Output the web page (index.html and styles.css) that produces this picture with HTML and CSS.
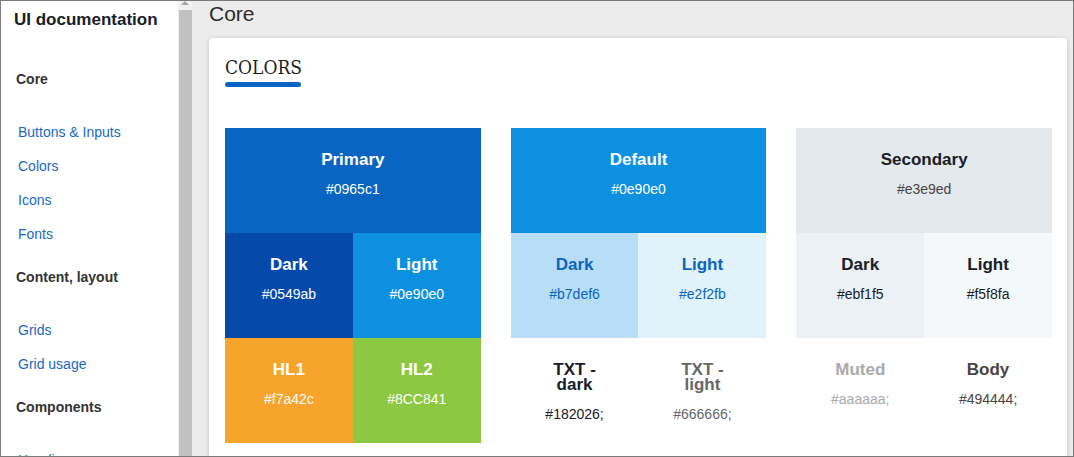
FILE: index.html
```html
<!DOCTYPE html>
<html lang="en">
<head>
<meta charset="utf-8">
<title>UI documentation</title>
<link rel="stylesheet" href="styles.css">
</head>
<body>
<div class="frame">
  <aside class="sidebar">
    <div class="brand">UI documentation</div>
    <nav class="nav-group">
      <div class="nav-heading">Core</div>
      <a class="nav-link" href="#">Buttons &amp; Inputs</a>
      <a class="nav-link" href="#">Colors</a>
      <a class="nav-link" href="#">Icons</a>
      <a class="nav-link" href="#">Fonts</a>
    </nav>
    <nav class="nav-group">
      <div class="nav-heading">Content, layout</div>
      <a class="nav-link" href="#">Grids</a>
      <a class="nav-link" href="#">Grid usage</a>
    </nav>
    <nav class="nav-group">
      <div class="nav-heading">Components</div>
      <a class="nav-link" href="#">Headings</a>
    </nav>
  </aside>
  <div class="scrollbar">
    <div class="scroll-arrow"></div>
    <div class="scroll-thumb"></div>
  </div>
  <main class="main">
    <h1 class="page-title">Core</h1>
    <section class="card">
      <div class="section-title">
        <h2 class="section-heading">COLORS</h2>
        <span class="title-bar"></span>
      </div>
      <div class="palette">
        <div class="swatch-group">
          <div class="swatch swatch-wide c-primary"><div class="swatch-name">Primary</div><div class="swatch-hex">#0965c1</div></div>
          <div class="swatch c-primary-dark"><div class="swatch-name">Dark</div><div class="swatch-hex">#0549ab</div></div>
          <div class="swatch c-primary-light"><div class="swatch-name">Light</div><div class="swatch-hex">#0e90e0</div></div>
          <div class="swatch c-hl1"><div class="swatch-name">HL1</div><div class="swatch-hex">#f7a42c</div></div>
          <div class="swatch c-hl2"><div class="swatch-name">HL2</div><div class="swatch-hex">#8CC841</div></div>
        </div>
        <div class="swatch-group">
          <div class="swatch swatch-wide c-default"><div class="swatch-name">Default</div><div class="swatch-hex">#0e90e0</div></div>
          <div class="swatch c-default-dark"><div class="swatch-name">Dark</div><div class="swatch-hex">#b7def6</div></div>
          <div class="swatch c-default-light"><div class="swatch-name">Light</div><div class="swatch-hex">#e2f2fb</div></div>
          <div class="swatch c-txt-dark"><div class="swatch-name">TXT -<br>dark</div><div class="swatch-hex">#182026;</div></div>
          <div class="swatch c-txt-light"><div class="swatch-name">TXT -<br>light</div><div class="swatch-hex">#666666;</div></div>
        </div>
        <div class="swatch-group">
          <div class="swatch swatch-wide c-secondary"><div class="swatch-name">Secondary</div><div class="swatch-hex">#e3e9ed</div></div>
          <div class="swatch c-secondary-dark"><div class="swatch-name">Dark</div><div class="swatch-hex">#ebf1f5</div></div>
          <div class="swatch c-secondary-light"><div class="swatch-name">Light</div><div class="swatch-hex">#f5f8fa</div></div>
          <div class="swatch c-muted"><div class="swatch-name">Muted</div><div class="swatch-hex">#aaaaaa;</div></div>
          <div class="swatch c-body"><div class="swatch-name">Body</div><div class="swatch-hex">#494444;</div></div>
        </div>
      </div>
    </section>
  </main>
</div>
</body>
</html>
```

FILE: styles.css
```css
html, body {
  margin: 0;
  padding: 0;
  background: #ffffff;
}

.frame {
  width: 1074px;
  height: 457px;
  box-sizing: border-box;
  border: 1px solid #7a7a7a;
  display: flex;
  overflow: hidden;
  font-family: "Liberation Sans", Arial, sans-serif;
}

/* Sidebar */
.sidebar {
  width: 177px;
  flex: none;
  background: #ffffff;
  padding-top: 9px;
  display: flex;
  flex-direction: column;
}

.brand {
  font-size: 17px;
  font-weight: bold;
  line-height: 20px;
  color: #182026;
  padding-left: 13px;
  margin-bottom: 39px;
}

.nav-group {
  display: flex;
  flex-direction: column;
  margin-bottom: 16px;
}

.nav-heading {
  font-size: 14px;
  font-weight: bold;
  line-height: 20px;
  color: #333333;
  padding-left: 15px;
  margin-bottom: 26px;
}

.nav-link {
  font-size: 14px;
  line-height: 34px;
  color: #1a67c4;
  padding-left: 17px;
  text-decoration: none;
}

/* Scrollbar */
.scrollbar {
  width: 14px;
  flex: none;
  background: #f1f1f1;
  display: flex;
  flex-direction: column;
}

.scroll-arrow {
  width: 0;
  height: 0;
  margin: 0 auto;
  border-left: 4px solid transparent;
  border-right: 4px solid transparent;
  border-bottom: 4px solid #a3a3a3;
}

.scroll-thumb {
  flex: 1;
  margin-top: 5px;
  margin-left: 1px;
  background: #c1c1c1;
}

/* Main */
.main {
  flex: 1;
  min-width: 0;
  background: #ececec;
  padding: 1px 6px 0 17px;
  display: flex;
  flex-direction: column;
}

.page-title {
  margin: 0 0 12px 0;
  font-size: 21px;
  font-weight: normal;
  line-height: 24px;
  color: #2b2b2b;
}

.card {
  flex: none;
  background: #ffffff;
  border-radius: 4px;
  box-shadow: 0 1px 5px rgba(0, 0, 0, 0.18);
  padding: 17px 15px 40px 16px;
}

.section-title {
  display: inline-flex;
  flex-direction: column;
}

.section-heading {
  margin: 0;
  font-family: "DejaVu Serif Condensed", "DejaVu Serif", "Liberation Serif", serif;
  font-stretch: condensed;
  font-size: 19px;
  font-weight: normal;
  line-height: 24px;
  color: #1e1e1e;
}

.title-bar {
  height: 5px;
  margin-top: 3px;
  margin-right: 1px;
  border-radius: 3px;
  background: #0965c1;
}

.palette {
  margin-top: 41px;
  display: grid;
  grid-template-columns: repeat(3, 1fr);
  gap: 30px;
}

.swatch-group {
  display: grid;
  grid-template-columns: 1fr 1fr;
  grid-auto-rows: 105px;
}

.swatch {
  box-sizing: border-box;
  padding-top: 24px;
  text-align: center;
}

.swatch-wide {
  grid-column: span 2;
}

.swatch-name {
  font-size: 17px;
  font-weight: bold;
  line-height: 15px;
}

.swatch-hex {
  font-size: 14px;
  line-height: 18px;
  margin-top: 13px;
}

.c-primary { background: #0965c1; color: #ffffff; }
.c-primary-dark { background: #0549ab; color: #ffffff; }
.c-primary-light { background: #0e90e0; color: #ffffff; }
.c-hl1 { background: #f7a42c; color: #ffffff; }
.c-hl2 { background: #8cc841; color: #ffffff; }

.c-default { background: #0e90e0; color: #ffffff; }
.c-default-dark { background: #b7def6; color: #0965c1; }
.c-default-light { background: #e2f2fb; color: #0965c1; }
.c-txt-dark { background: #ffffff; color: #182026; }
.c-txt-light { background: #ffffff; color: #666666; }

.c-secondary { background: #e3e9ed; color: #182026; }
.c-secondary .swatch-hex { color: #494444; }
.c-secondary-dark { background: #ebf1f5; color: #182026; }
.c-secondary-light { background: #f5f8fa; color: #182026; }
.c-muted { background: #ffffff; color: #aaaaaa; }
.c-body { background: #ffffff; color: #494444; }
```
